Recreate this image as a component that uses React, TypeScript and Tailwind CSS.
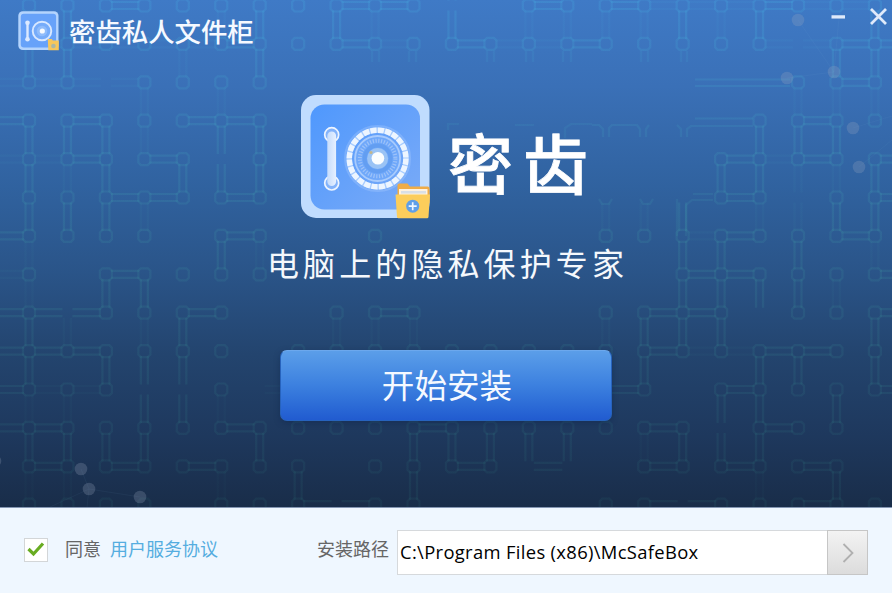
import { useState } from 'react';

type Cell = [number, number];
type Link = [number, number, number]; // col, row, length in cells

const px = (c: number) => 29 + c * 38.45;
const py = (r: number) => 5.5 + r * 38.4;

// nodes per row of the circuit grid
const nodeRows: number[][] = [
  [0, 1, 2, 3, 4, 5, 6, 7, 8, 9, 10, 13, 14, 15, 16, 17, 18, 19, 20, 21, 22],
  [1, 2, 3, 4, 5, 6, 7, 8, 9, 10, 11, 12, 13, 14, 15, 16, 17, 18, 19, 21, 22],
  [0, 1, 3, 4, 5, 6, 20, 21, 22],
  [0, 1, 2, 3, 4, 5, 6, 19, 20, 21, 22],
  [0, 1, 2, 3, 4, 6, 18, 19, 20, 21, 22],
  [0, 1, 2, 3, 4, 5, 6, 18, 19, 21, 22],
  [0, 1, 2, 3, 5, 6, 9, 15, 16, 17, 18, 19, 20, 21, 22],
  [0, 2, 3, 4, 5, 6, 17, 18, 19, 20, 21, 22],
  [0, 2, 3, 4, 5, 8, 9, 10, 15, 16, 17, 18, 20, 21, 22],
  [0, 1, 2, 3, 4, 5, 7, 8, 9, 10, 11, 12, 13, 14, 15, 16, 17, 18, 19, 20, 21, 22],
  [0, 1, 2, 5, 16, 18, 19, 20, 21, 22],
  [0, 1, 2, 3, 4, 5, 6, 7, 8, 9, 10, 11, 12, 13, 14, 15, 16, 17, 19, 20, 21],
  [0, 1, 2, 3, 4, 5, 6, 7, 9, 10, 11, 12, 16, 17, 18, 19, 20, 21],
  [0, 1, 2, 3, 5, 6, 7, 9, 10, 15, 16, 18, 19, 20, 21, 22],
];

const across: Link[] = [
  [2, 0, 1], [8, 0, 2], [13, 0, 1], [15, 0, 1], [19, 0, 1],
  [5, 1, 1], [8, 1, 1], [11, 1, 1], [14, 1, 1], [21, 1, 2],
  [21, 2, 1],
  [-1, 3, 1], [1, 3, 1], [4, 3, 2], [20, 3, 1],
  [1, 4, 1], [3, 4, 1], [18, 4, 1], [20, 4, 1], [22, 4, 1],
  [2, 5, 2], [5, 5, 1], [18, 5, 1], [22, 5, 1],
  [-1, 6, 1], [5, 6, 1], [18, 6, 1], [21, 6, 1],
  [2, 7, 1], [17, 7, 2], [22, 7, 1],
  [-1, 8, 1], [0, 8, 2], [4, 8, 1], [9, 8, 1], [16, 8, 2], [22, 8, 1],
  [-1, 9, 1], [0, 9, 2], [16, 9, 1], [19, 9, 2],
  [-1, 10, 1], [15, 10, 1], [18, 10, 1], [22, 10, 1],
  [-1, 11, 2], [5, 11, 1], [10, 11, 1], [16, 11, 1], [19, 11, 1],
  [0, 12, 1], [2, 12, 1], [4, 12, 1], [11, 12, 1], [13, 12, 1], [16, 12, 1], [18, 12, 1], [20, 12, 1],
  [7, 13, 2], [16, 13, 2], [20, 13, 1],
];

const down: Link[] = [
  [1, 0, 2], [6, 0, 2], [8, 0, 1], [11, -1, 2], [17, 0, 1], [19, 0, 1], [22, 0, 2],
  [0, 1, 1], [21, 1, 1],
  [0, 3, 3], [1, 3, 1], [2, 3, 3], [5, 3, 2], [6, 3, 2], [19, 3, 2], [20, 3, 1], [21, 3, 1],
  [4, 4, 1], [18, 4, 1], [22, 4, 2],
  [1, 5, 1], [17, 5, 2], [21, 5, 1],
  [5, 6, 1], [18, 6, 2], [20, 6, 2],
  [2, 7, 1], [3, 7, 1], [17, 7, 1], [19, 7, 1],
  [0, 8, 2], [4, 8, 3], [16, 8, 2], [17, 8, 1], [18, 8, 1], [22, 8, 2],
  [2, 9, 1], [3, 9, 2], [19, 9, 2], [20, 9, 1],
  [18, 10, 2], [21, 10, 1],
  [0, 11, 1], [1, 11, 1], [2, 11, 1], [3, 11, 1], [6, 11, 1], [10, 11, 2],
  [11, 11, 1], [12, 11, 1], [13, 11, 1], [14, 11, 1], [17, 11, 1], [19, 11, 1],
  [7, 12, 1], [21, 12, 1],
];

const faintAcross: Link[] = [
  [0, 1, 5], [-1, 2, 4], [9, 1, 1], [12, 1, 2], [19, 1, 2], [16, 0, 3], [20, 0, 2],
  [-1, 4, 2], [19, 4, 1], [17, 6, 1], [18, 9, 1], [6, 10, 1], [17, 9, 1], [-1, 7, 1], [0, 10, 2],
];

const faintDown: Link[] = [
  [5, 0, 1], [9, 0, 1], [13, 0, 1], [14, 0, 1], [15, 0, 1], [16, 0, 1], [18, 0, 1],
  [4, 1, 1], [3, 2, 2], [5, 2, 1], [20, 2, 1], [21, 2, 1], [22, 2, 1], [1, 4, 1], [20, 4, 2],
  [21, 4, 1], [3, 5, 1], [15, 5, 1], [16, 5, 1], [19, 5, 1], [0, 6, 2], [6, 6, 1], [22, 6, 1],
  [21, 7, 1], [1, 8, 1], [3, 8, 1], [8, 8, 1], [9, 8, 1], [10, 8, 1], [15, 8, 1], [0, 10, 1],
  [1, 10, 1], [5, 10, 1], [16, 11, 1], [0, 12, 1], [1, 12, 1], [5, 12, 1], [19, 12, 1],
];

function hPath([c, r, n]: Link) {
  let d = '';
  for (let i = 0; i < n; i++) {
    const a = px(c + i) + 5;
    const b = px(c + i + 1) - 5;
    d += `M${a} ${py(r) - 3.5}H${b}M${a} ${py(r) + 3.5}H${b}`;
  }
  return d;
}

function vPath([c, r, n]: Link) {
  let d = '';
  for (let i = 0; i < n; i++) {
    const a = py(r + i) + 5;
    const b = py(r + i + 1) - 5;
    d += `M${px(c) - 3.5} ${a}V${b}M${px(c) + 3.5} ${a}V${b}`;
  }
  return d;
}

function nodePath([c, r]: Cell) {
  return `M${px(c) - 3.5} ${py(r) - 6}h7l2.5 2.5v7l-2.5 2.5h-7l-2.5 -2.5v-7z`;
}

const nodes: Cell[] = nodeRows.flatMap((cols, r) => cols.map((c) => [c, r] as Cell));

const dots = [
  [798, 20], [834, 72], [787, 78], [853, 128], [859, 167],
  [81, 469], [89, 489], [140, 497], [-5, 461],
];

function Circuit() {
  return (
    <svg className="absolute inset-0" width="892" height="507" viewBox="0 0 892 507" fill="none">
      <defs>
        <linearGradient id="circuit" x1="0" y1="0" x2="0" y2="507" gradientUnits="userSpaceOnUse">
          <stop offset="0" stopColor="#44a3dc" stopOpacity="0.4" />
          <stop offset="0.5" stopColor="#3c929f" stopOpacity="0.28" />
          <stop offset="1" stopColor="#2c7378" stopOpacity="0.18" />
        </linearGradient>
      </defs>
      <g stroke="url(#circuit)" strokeWidth="2.2">
        <path d={across.map(hPath).join('') + down.map(vPath).join('')} opacity="0.75" />
        <path d={nodes.map(nodePath).join('')} opacity="0.7" />
        <path d={faintAcross.map(hPath).join('') + faintDown.map(vPath).join('')} opacity="0.25" />
        {/* cut-off traces around the logo */}
        <path d="M695 79.500H790M695 86H790M695 118.500H753" opacity="0.7" />
        <path d="M592 125H599L603 129V137M609 137V128L612 125H637L640 129V137M646 137V129L649 125M677 125L681 129V137M687 137V129L691 126H753M693 194H713M599 199L602 204H609L612 199M640 199L643 204H650L653 199M677 199V236M686 236V205L692 200H713" opacity="0.6" />
        <path d="M372 51V62M379 51V62M409 51V62M416 51V62M487 51V62M494 51V62M526 51V62M533 51V62M563 51V62M571 51V62M641 51V62M648 51V62M681 51V62M687 51V62" opacity="0.45" />
        <path d="M565 138V128L571 124H592M448 130V124H459M515 125H534" opacity="0.5" />
      </g>
      <path d="M798 20L834 72L787 78M834 72L839 18M853 128L892 116M859 167L892 140M81 469L89 489L140 497M89 489L50 507M89 489L87 507" stroke="#8fb4e0" strokeOpacity="0.06" />
      {dots.map(([x, y]) => (
        <circle key={`${x}-${y}`} cx={x} cy={y} r="6.300" fill="#9aa6c0" fillOpacity="0.25" />
      ))}
    </svg>
  );
}

function SafeLogo() {
  return (
    <svg width="129" height="124" viewBox="0 0 129 124" fill="none" className="shrink-0">
      <defs>
        <linearGradient id="door" x1="10" y1="10" x2="120" y2="114" gradientUnits="userSpaceOnUse">
          <stop stopColor="#4f98fd" />
          <stop offset="1" stopColor="#7babf7" />
        </linearGradient>
        <linearGradient id="bar" x1="26" y1="0" x2="35" y2="0" gradientUnits="userSpaceOnUse">
          <stop stopColor="#c5dcfc" />
          <stop offset="1" stopColor="#e6f0ff" />
        </linearGradient>
      </defs>
      <rect x="0" y="0" width="128.500" height="123" rx="15" fill="#c0dcfe" />
      <rect x="9.500" y="9.500" width="109.500" height="105" rx="14" fill="url(#door)" />
      {/* handle */}
      <circle cx="30.700" cy="39.700" r="7" fill="#83b3fb" stroke="#eef5ff" strokeWidth="1.700" />
      <circle cx="30.700" cy="88" r="7" fill="#83b3fb" stroke="#eef5ff" strokeWidth="1.700" />
      <rect x="26.300" y="36.500" width="8.800" height="54.500" rx="4.400" fill="url(#bar)" />
      {/* dial */}
      <circle cx="76.600" cy="63.500" r="32.500" stroke="#a9ccff" strokeWidth="2" strokeOpacity="0.35" />
      <circle cx="76.600" cy="63.500" r="28.500" stroke="#a9cdff" strokeWidth="5.500" />
      <circle cx="76.600" cy="63.500" r="28.300" stroke="#edf5ff" strokeWidth="5.500" strokeDasharray="6.100 1.310" />
      <circle cx="76.600" cy="63.500" r="22.500" fill="#6fa8fa" stroke="#a8cbfd" strokeWidth="1.800" />
      <circle cx="76.600" cy="63.500" r="17.800" stroke="#9dc2f8" strokeWidth="4" strokeDasharray="1.200 1.600" />
      <circle cx="76.600" cy="63.500" r="13" stroke="#5492e6" strokeWidth="4" strokeOpacity="0.45" />
      <circle cx="76.600" cy="63.500" r="10.500" fill="#9ac3f5" />
      <circle cx="76.900" cy="63.300" r="6.300" fill="#fafdff" />
      <circle cx="70" cy="57.500" r="1.600" fill="#c2b68d" />
      {/* folder */}
      <path d="M96.500 90.500a2 2 0 0 1 2-2h8l2.500 3H126.500a2 2 0 0 1 2 2V108h-32z" fill="#efac48" />
      <rect x="98" y="94" width="28.500" height="7" fill="#fff2df" />
      <rect x="100" y="96" width="25" height="2.600" fill="#d9dfe5" />
      <path d="M94.500 99.500h34.500l-1.500 22.500a1.500 1.500 0 0 1-1.500 1.300H97.500a1.500 1.500 0 0 1-1.500-1.300z" fill="#fccd5b" />
      <circle cx="111.700" cy="111.200" r="6.500" fill="#5f9fe8" />
      <path d="M107.700 111.200h8M111.700 107.200v8" stroke="#eff7ff" strokeWidth="1.700" />
    </svg>
  );
}

function SmallLogo() {
  return (
    <svg width="41" height="40" viewBox="0 0 41 40" fill="none" className="shrink-0">
      <rect x="0.300" y="0.300" width="40.200" height="38.700" rx="4.500" fill="#b4d4fd" />
      <rect x="2.800" y="2.800" width="35.300" height="33.700" rx="3" fill="#67a2f9" />
      <path d="M9.500 11.500V28.500" stroke="#dbe9ff" strokeWidth="2.400" />
      <circle cx="9.500" cy="11.800" r="2.300" fill="#dbe9ff" />
      <circle cx="9.500" cy="28.200" r="2.300" fill="#dbe9ff" />
      <circle cx="24" cy="20" r="9.300" fill="#76acfa" stroke="#d8e8ff" strokeWidth="1.900" />
      <circle cx="24" cy="20" r="5.300" fill="#8fbcfb" />
      <circle cx="24.300" cy="20" r="2.600" fill="#f8fbff" />
      <path d="M29.800 28h4l1 1.500h6V39.200H30.300z" fill="#f6c75b" />
      <circle cx="35.400" cy="35" r="2.300" fill="#a9b7a6" />
    </svg>
  );
}

export default function App() {
  const [agreed, setAgreed] = useState(true);

  return (
    <main className="flex h-[593px] w-[892px] flex-col overflow-hidden bg-[#eff7ff] font-['Noto_Sans_CJK_SC',sans-serif]">
      <section className="relative h-[507px] shrink-0 bg-[linear-gradient(180deg,#3f7ac6_0%,#3a70b7_17%,#30629f_37%,#2a5488_54%,#23446e_70%,#1e385d_86%,#192d49_100%)]">
        <Circuit />
        <div className="relative flex h-full flex-col items-center">
          <header className="flex h-[62px] w-full items-start pl-[18px] pt-[11px]">
            <SmallLogo />
            <h1 className="ml-[10px] text-[26.4px] font-medium leading-[40px] text-[#f5f9ff]">密齿私人文件柜</h1>
            <div className="-mt-[3px] ml-auto flex gap-[25px] pr-[5px]">
              <button aria-label="最小化" className="h-[17px] w-[14px]">
                <svg width="14" height="17" viewBox="0 0 14 17"><path d="M0.500 8.900H14" stroke="#dfeafa" strokeWidth="3.300" /></svg>
              </button>
              <button aria-label="关闭" className="h-[17px] w-[17px]">
                <svg width="17" height="17" viewBox="0 0 17 17"><path d="M1 1L16 16M16 1L1 16" stroke="#dfeafa" strokeWidth="2.800" /></svg>
              </button>
            </div>
          </header>

          <div className="mt-[33px] flex h-[124px] items-center pl-[7px]">
            <SafeLogo />
            <h2 className="ml-[18px] mt-[8px] text-[65px] font-medium leading-none tracking-[10px] text-white [-webkit-text-stroke:0.8px_white]">密齿</h2>
          </div>

          <p className="mt-[19px] pl-[3px] text-[32px] leading-[48px] tracking-[4.100px] text-[#f5f8fc]">电脑上的隐私保护专家</p>

          <button className="mt-[64px] h-[71px] w-[332px] rounded-[7px] border border-[#2763bd] border-t-[#6ca8ed] bg-linear-to-b from-[#5b9ee9] via-[#3c80df] to-[#215bd0] pb-[2px] pl-[2px] text-[32.600px] leading-none text-[#f5f9ff] shadow-[0_2px_6px_rgba(10,30,70,0.35)]">
            开始安装
          </button>
        </div>
      </section>

      <footer className="flex flex-1 items-start border-t border-[#8496b3] pl-6 text-lg leading-[27px] text-[#666]">
        <button
          role="checkbox"
          aria-checked={agreed}
          onClick={() => setAgreed(!agreed)}
          className="mt-[30px] flex h-6 w-6 items-center justify-center border border-[#d3d6d8] bg-white"
        >
          {agreed && (
            <svg width="18" height="16" viewBox="0 0 18 16" fill="none">
              <path d="M1.500 7L6.500 12L16 1.500" stroke="#68ac22" strokeWidth="3.200" />
            </svg>
          )}
        </button>
        <span className="ml-[17px] mt-[27px]">同意</span>
        <a className="ml-[9px] mt-[27px] text-[#55ade0]">用户服务协议</a>
        <span className="ml-[99px] mt-[27px]">安装路径</span>
        <div className="ml-[8px] mt-[22px] flex h-[45px] w-[471px]">
          <div className="flex flex-1 items-center border border-r-0 border-[#d6d9dc] bg-white pb-[3px] pl-[2px] font-['Open_Sans',sans-serif] text-[18.400px] tracking-[0.330px] text-black">
            <span className="whitespace-nowrap">C:\Program Files (x86)\McSafeBox</span>
          </div>
          <button className="flex w-[41px] items-center justify-center border border-[#c6c6c6] bg-linear-to-b from-[#f3f3f3] to-[#dcdcdc]">
            <svg width="12" height="20" viewBox="0 0 12 20" fill="none">
              <path d="M1.500 1L10.500 10L1.500 19" stroke="#b0b0b0" strokeWidth="1.800" />
            </svg>
          </button>
        </div>
      </footer>
    </main>
  );
}
